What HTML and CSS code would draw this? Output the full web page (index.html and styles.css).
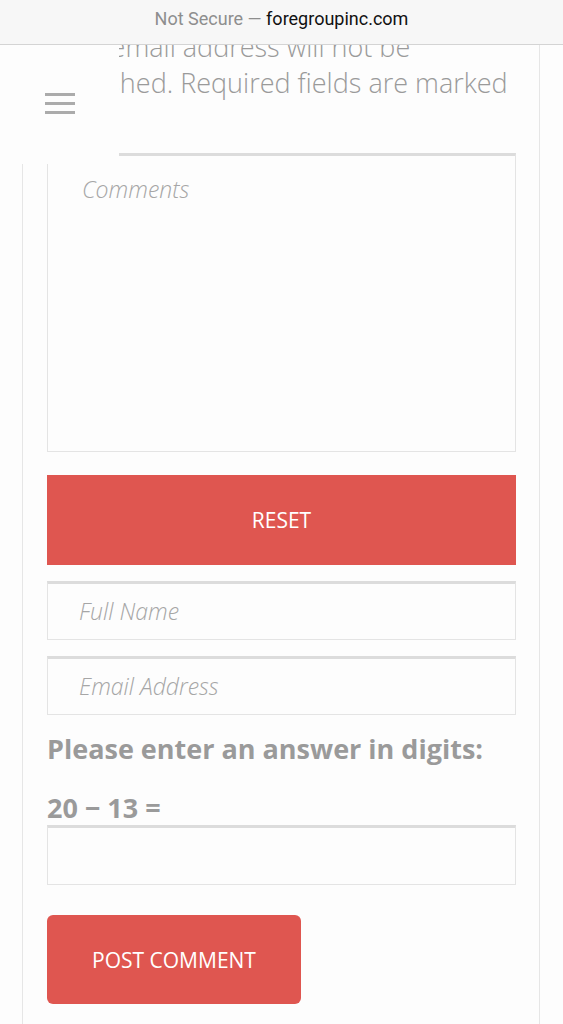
FILE: index.html
```html
<!DOCTYPE html>
<html>
<head>
    <title>Leave a Reply</title>
    <link rel="stylesheet" href="styles.css">
</head>
<body>
    <div class="urlbar">
        <span class="secure">Not Secure &mdash;</span> foregroupinc.com
    </div>
    <div class="menu">
        <div class="burger">
            <span></span>
            <span></span>
            <span></span>
        </div>
    </div>
    <div class="wrap">
        <p class="note">Your email address will not be<br>published. Required fields are marked<br>*</p>
        <form class="comment-form">
            <textarea class="field comments" placeholder="Comments"></textarea>
            <button type="reset" class="btn reset">RESET</button>
            <input type="text" class="field line" placeholder="Full Name">
            <input type="text" class="field line" placeholder="Email Address">
            <p class="captcha-label">Please enter an answer in digits:</p>
            <label class="captcha-sum" for="answer">20 &minus; 13 =</label>
            <input type="text" id="answer" class="field line answer">
            <button type="submit" class="btn post">POST COMMENT</button>
        </form>
    </div>
</body>
</html>
```

FILE: styles.css
```css
* {
    margin: 0px;
    padding: 0px;
    box-sizing: border-box;
}
body {
    font-family: "Open Sans", sans-serif;
    background: #fdfdfd;
    width: 563px;
    height: 1024px;
    overflow: hidden;
}
.urlbar {
    position: absolute;
    top: 0;
    left: 0;
    width: 100%;
    height: 45px;
    background: #f7f7f7;
    border-bottom: 1px solid #d4d4d4;
    font-family: Roboto, "Liberation Sans", sans-serif;
    font-size: 18px;
    line-height: 38px;
    text-align: center;
    color: #111;
    z-index: 2;
}
.urlbar .secure {
    color: #8e8e8e;
}
.menu {
    position: absolute;
    top: 45px;
    left: 0;
    width: 119px;
    height: 119px;
    background: #fdfdfd;
    z-index: 1;
}
.burger {
    display: flex;
    flex-direction: column;
    gap: 6px;
    width: 30px;
    margin: 48px 0 0 45px;
}
.burger span {
    display: block;
    height: 3px;
    background: #ababab;
}
.wrap {
    margin-left: 22px;
    width: 518px;
    min-height: 1024px;
    border-left: 1px solid #e6e6e6;
    border-right: 1px solid #e6e6e6;
    padding: 29px 23px 0 24px;
}
.note {
    font-size: 27px;
    font-weight: 300;
    line-height: 36px;
    color: #9a9a9a;
    white-space: nowrap;
}
.comment-form {
    display: flex;
    flex-direction: column;
    margin-top: 16px;
}
.field {
    width: 100%;
    border: 1px solid #e4e4e4;
    border-top: 3px solid #dcdcdc;
    background: #fdfdfd;
    font-family: "Open Sans", sans-serif;
    font-size: 23px;
    font-weight: 300;
    font-style: italic;
    color: #666;
    outline: none;
}
.field::placeholder {
    color: #a6a6a6;
}
.comments {
    height: 299px;
    padding: 17px 34px;
    resize: none;
}
.line {
    height: 59px;
    padding: 0 31px 2px;
    margin-top: 16px;
}
.btn {
    border: none;
    background: #df5650;
    color: #fff;
    font-family: "Open Sans", sans-serif;
    font-size: 21px;
    cursor: pointer;
}
.reset {
    height: 90px;
    margin-top: 23px;
}
.captcha-label,
.captcha-sum {
    font-size: 27px;
    font-weight: 700;
    line-height: 36px;
    color: #9a9a9a;
}
.captcha-label {
    margin-top: 16px;
}
.captcha-sum {
    margin-top: 23px;
}
.answer {
    height: 60px;
    margin-top: -1px;
}
.post {
    align-self: flex-start;
    width: 254px;
    height: 89px;
    margin-top: 30px;
    border-radius: 6px;
}
```
